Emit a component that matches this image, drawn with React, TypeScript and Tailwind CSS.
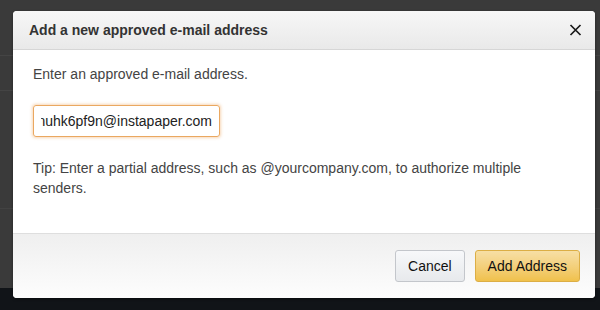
import React from "react";

function CloseIcon() {
  return (
    <svg width="13" height="12" viewBox="0 0 13 12" className="block">
      <path d="M1.5 1 L11.5 11 M11.5 1 L1.5 11" stroke="#1a1a1a" strokeWidth="1.7" fill="none" />
    </svg>
  );
}

export default function App() {
  return (
    <div className="relative w-[600px] h-[310px] overflow-hidden font-['Liberation_Sans',Arial,sans-serif]">
      {/* page behind the dimmed overlay */}
      <div className="flex h-full flex-col">
        <div className="flex flex-1 flex-col bg-[#3a3a3a]">
          <div className="h-[56px] border-b border-[#444]" />
          <div className="h-[35px] border-b border-[#444]" />
          <div className="h-[118px] border-b border-[#424242]" />
        </div>
        <div className="h-[22px] bg-[#111418]" />
      </div>

      {/* modal */}
      <div className="absolute left-[13px] top-[11px] flex h-[287px] w-[582px] flex-col overflow-hidden rounded-[4px] bg-white shadow-[0_1px_3px_rgba(0,0,0,0.4)]">
        <div className="flex h-[39px] items-center justify-between border-b border-[#d6d6d6] bg-linear-to-b from-[#f7f7f7] to-[#e9e9e9] pl-[16px] pr-[13px]">
          <h1 className="text-[14px] font-bold text-[#333]">Add a new approved e-mail address</h1>
          <CloseIcon />
        </div>

        <div className="flex-1 px-[20px] pt-[14px] text-[14px] leading-[20px] text-[#444]">
          <p>Enter an approved e-mail address.</p>
          <div className="mt-[21px] flex h-[32px] w-[187px] items-center rounded-[3px] border border-[#eaa860] px-[7px] shadow-[0_0_3px_1px_rgba(228,121,17,0.3)]">
            <div className="flex w-full justify-end overflow-hidden whitespace-nowrap text-[14px] text-[#222]">
              <span>yxnuhk6pf9n@instapaper.com</span>
            </div>
          </div>
          <p className="mt-[21px] pr-[40px]">
            Tip: Enter a partial address, such as @yourcompany.com, to authorize multiple senders.
          </p>
        </div>

        <div className="flex h-[65px] items-center justify-end gap-[10px] border-t border-[#dedede] bg-linear-to-b from-[#efefef] to-[#fdfdfd] pr-[15px]">
          <button className="h-[32px] rounded-[3px] border border-[#c3c6cb] bg-linear-to-b from-[#f7f8fa] to-[#e7e9ec] px-[12px] text-[14px] text-[#111]">
            Cancel
          </button>
          <button className="h-[32px] rounded-[3px] border border-[#dcae45] bg-linear-to-b from-[#f7dfa5] to-[#f0c14b] px-[12px] text-[14px] text-[#111]">
            Add Address
          </button>
        </div>
      </div>
    </div>
  );
}
